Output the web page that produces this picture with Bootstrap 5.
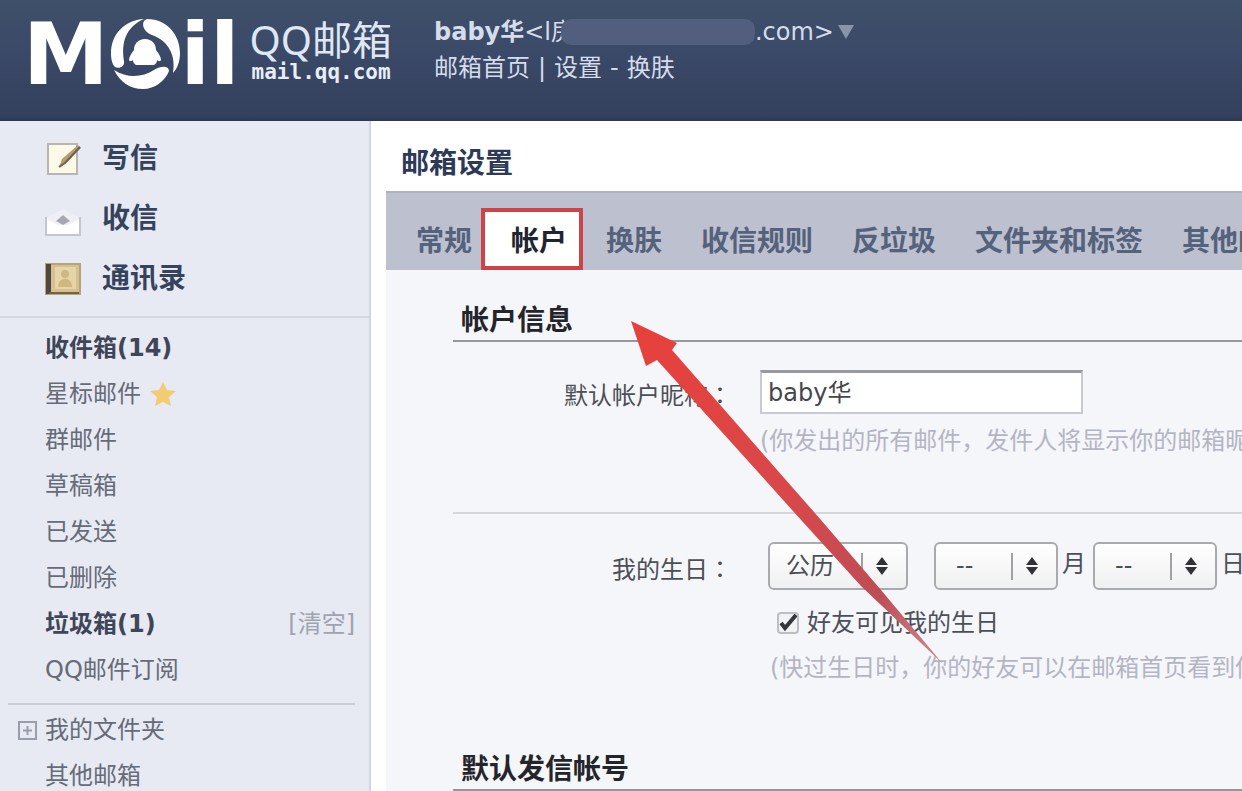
<!DOCTYPE html>
<html lang="zh-CN">
<head>
<meta charset="utf-8">
<meta name="viewport" content="width=device-width, initial-scale=1">
<title>QQ邮箱 - 邮箱设置</title>
<link href="https://cdn.jsdelivr.net/npm/bootstrap@5.3.0/dist/css/bootstrap.min.css" rel="stylesheet">
<style>
  body { font-family: "DejaVu Sans", "Noto Sans CJK SC", sans-serif; font-size: 24px; line-height: 36px; color: #4c4f5a; background: #fff; }
  a { color: inherit; text-decoration: none; }
  .topbar { height: 121px; background: linear-gradient(#3f506a, #3a4967 45%, #33405e 96%, #2b3752); color: #d5dcea; white-space: nowrap; }
  .brand { width: 404px; padding-left: 23px; color: #fff; }
  .brand-word { font-size: 86px; font-weight: 700; line-height: 108px; }
  .brand-ring { width: 72px; height: 72px; margin-top: 18px; }
  .brand-text { padding: 18px 0 0 10px; }
  .brand-name { font-family: "Noto Sans", "Noto Sans CJK SC", sans-serif; font-size: 40px; font-weight: 400; line-height: 44px; color: #dfe7f4; }
  .brand-host { font-family: "DejaVu Sans Mono", monospace; font-size: 21px; font-weight: 700; line-height: 20px; padding-left: 2px; color: #e8eef8; }
  .account { padding: 14px 0 0 30px; }
  .masked { width: 194px; height: 26px; margin-left: -14px; border-radius: 10px; background: #515e7d; }
  .caret { width: 16px; height: 14px; }
  .side { flex: 0 0 371px; background: #e7eaf3; border-right: 2px solid #d3d6e2; }
  .side-main { padding: 8px 0 7px 44px; border-bottom: 2px solid #d5d8e2; font-size: 28px; font-weight: 700; color: #36435c; }
  .side-main a { height: 60px; gap: 20px; }
  .side-main svg { width: 38px; height: 36px; }
  .folder-row { display: flex; align-items: center; height: 46px; padding: 0 14px 0 45px; color: #666b78; }
  .folder-row.unread { color: #3f4657; }
  .folders { padding: 7px 0 10px; }
  .clear-link { color: #9fa3af; }
  .more { margin: 0 14px 0 8px; border-top: 2px solid #c9ccd7; padding-top: 2px; }
  .more .folder-row { padding-left: 10px; gap: 8px; }
  .expander { width: 19px; height: 19px; flex: none; }
  .work { min-width: 0; }
  .page-title { font-size: 28px; font-weight: 700; line-height: 40px; color: #2c3a57; padding: 23px 0 7px 30px; margin: 0; }
  .panel { margin-left: 15px; background: #f5f6f9; }
  .tabs { height: 79px; padding: 16px 0 0 30px; gap: 39px; background: #bcc0cf; border-top: 2px solid #b0b3bf; font-size: 28px; font-weight: 700; white-space: nowrap; }
  .tabs .nav-link { padding: 0; line-height: 66px; color: #55627c; }
  .tabs .nav-link.active { height: 62px; line-height: 60px; margin: -1px -16px 0 -30px; padding: 0 12px 0 26px; border: 4px solid #cf4247; background: #fff; color: #1f2530; }
  .settings { padding: 31px 0 0 67px; }
  .section-title { font-size: 28px; font-weight: 700; line-height: 40px; height: 41px; color: #23252b; padding-left: 8px; margin: 0; border-bottom: 2px solid #95979d; white-space: nowrap; }
  .field-row { display: flex; white-space: nowrap; }
  .field-label { flex: 0 0 279px; padding-top: 6px; text-align: right; color: #4c4f56; }
  .colon { font-family: "Noto Sans CJK TC", sans-serif; }
  .hint { color: #b3b5c4; padding-top: 9px; }
  .nick { width: 323px; height: 44px; padding: 0 6px 4px; font-size: 24px; color: #44464c; background: #fff; border: 2px solid #c9cad1; border-top: 3px solid #999a9f; }
  .nick-row { padding: 28px 0 53px; border-bottom: 2px solid #d5d6db; }
  .picker { appearance: none; width: 124px; height: 48px; padding: 0 20px; font-size: 24px; color: #4c4f56; border: 2px solid #a9aaae; border-radius: 6px;
    background: url("data:image/svg+xml,%3Csvg xmlns='http://www.w3.org/2000/svg' width='46' height='44'%3E%3Cpath d='M2 9v27' stroke='%23a0a1a5' stroke-width='2'/%3E%3Cpath d='M22 13l6 8H16zM22 31l6-8H16z' fill='%23303238'/%3E%3C/svg%3E") right center no-repeat, linear-gradient(#fff, #f0f0f2); }
  .picker.wide { width: 140px; padding-left: 16px; }
  .picker.spaced { margin-left: 26px; }
  .unit { margin: 0 7px 4px 4px; }
  .pickers { margin-left: 12px; }
  .birth-note { margin-left: 14px; }
  .tick-line { margin-left: 21px; padding-top: 15px; }
  .tick { appearance: none; width: 22px; height: 22px; margin: 0; border: 2px solid #bdbec3; border-radius: 4px; flex: none;
    background: #f2f2f4 url("data:image/svg+xml,%3Csvg xmlns='http://www.w3.org/2000/svg' viewBox='0 0 20 20'%3E%3Cpath d='M3 10l4 5L18 2' fill='none' stroke='%2333363d' stroke-width='4'/%3E%3C/svg%3E") center / 20px no-repeat; }
  .birth-row { padding: 28px 0 64px; }
  .birth-row .field-label { padding-top: 8px; }
  .pointer { left: 259px; top: 198px; width: 314px; height: 346px; pointer-events: none; }
</style>
</head>
<body>
<div class="d-flex flex-column vh-100 overflow-hidden">
  <header class="topbar d-flex flex-shrink-0 overflow-hidden">
    <a href="#" class="brand d-flex flex-shrink-0">
      <span class="brand-word">M</span>
      <svg class="brand-ring flex-shrink-0" viewBox="0 0 72 72" fill="#fff" aria-hidden="true">
        <path d="M35 1C15 2 2 17 2 35c0 6 1 11 4 14 4 2 10 0 9-6C12 24 17 9 35 1z"/>
        <path d="M38 1c20 0 33 16 33 34 0 9-3 16-7 20 3-17-4-32-21-38-9-3-12-14-5-16z"/>
        <path d="M5 52c14 9 29 7 40 0 8-5 15-4 15 1-4 10-14 18-26 18C21 71 11 64 5 52z"/>
        <path d="M36 21c7 0 11 5 11 11 3 4 5 7 5 10-1 2-3 1-4 0 0 2-1 4-3 5H27c-2-1-3-3-3-5-1 1-3 2-4 0 0-3 2-6 5-10 0-6 4-11 11-11z"/>
      </svg>
      <span class="brand-word">il</span>
      <span class="brand-text d-flex flex-column">
        <span class="brand-name">QQ邮箱</span>
        <span class="brand-host">mail.qq.com</span>
      </span>
    </a>
    <div class="account">
      <div class="d-flex align-items-center">
        <strong>baby华</strong><span>&lt;l房</span><span class="masked position-relative"></span><span>.com&gt;</span>
        <svg class="caret ms-1" viewBox="0 0 16 14" fill="#8893ac" aria-hidden="true"><path d="M0 0h16L8 14z"/></svg>
      </div>
      <nav class="d-flex"><a href="#">邮箱首页</a><span class="mx-2">|</span><a href="#">设置</a><span class="mx-2">-</span><a href="#">换肤</a></nav>
    </div>
  </header>

  <div class="d-flex flex-grow-1">
    <aside class="side">
      <nav class="side-main">
        <a href="#" class="d-flex align-items-center">
          <svg viewBox="0 0 38 36" aria-hidden="true"><path d="M4 3h29v30H4z" fill="#fdf9e8" stroke="#b9b5b0" stroke-width="2"/><path d="M15 26l3-8L34 4l3 3-15 15z" fill="#b59d70"/><path d="M15 26l6-4L36 6" fill="none" stroke="#6d624f" stroke-width="2"/></svg>
          写信</a>
        <a href="#" class="d-flex align-items-center">
          <svg viewBox="0 0 38 36" aria-hidden="true"><path d="M2 17L19 8l17 9v18H2z" fill="#eef0f6"/><path d="M2 18l12 6h10l12-6v16H2z" fill="#fff"/><path d="M2 16v18h34V16" fill="none" stroke="#c3c6cf" stroke-width="2"/><path d="M12 20l7-6 7 6-7 4z" fill="#a5a8b2"/></svg>
          收信</a>
        <a href="#" class="d-flex align-items-center">
          <svg viewBox="0 0 38 36" aria-hidden="true"><path d="M2 3h34v30H2z" fill="#d6c091" stroke="#b5a37c" stroke-width="2"/><path d="M2 3h5v30H2z" fill="#4f4841"/><path d="M11 6h21v22H11z" fill="#e6d5a9"/><circle cx="21" cy="13" r="4" fill="#cfb77f"/><path d="M14 26c0-11 14-11 14 0z" fill="#cfb77f"/><path d="M5 32h30" stroke="#756341" stroke-width="2"/></svg>
          通讯录</a>
      </nav>
      <nav class="folders">
        <a href="#" class="folder-row unread"><strong>收件箱(14)</strong></a>
        <a href="#" class="folder-row">星标邮件
          <svg class="ms-2" width="28" height="26" viewBox="0 0 28 26" fill="#f1cc72" aria-hidden="true"><path d="M14 1l4 8 9 1-7 6 2 9-8-4-8 4 2-9-7-6 9-1z"/></svg></a>
        <a href="#" class="folder-row">群邮件</a>
        <a href="#" class="folder-row">草稿箱</a>
        <a href="#" class="folder-row">已发送</a>
        <a href="#" class="folder-row">已删除</a>
        <div class="folder-row unread justify-content-between"><a href="#"><strong>垃圾箱(1)</strong></a><a href="#" class="clear-link">[清空]</a></div>
        <a href="#" class="folder-row">QQ邮件订阅</a>
      </nav>
      <nav class="more">
        <a href="#" class="folder-row"><svg class="expander" viewBox="0 0 19 19" fill="none" stroke="#999eab" stroke-width="2" aria-hidden="true"><path d="M1 1h17v17H1zM5 9.500h9M9.500 5v9"/></svg>我的文件夹</a>
        <a href="#" class="folder-row"><span class="expander"></span>其他邮箱</a>
      </nav>
    </aside>

    <main class="work flex-grow-1 position-relative overflow-hidden">
      <h1 class="page-title">邮箱设置</h1>
      <div class="panel h-100">
        <nav class="tabs nav flex-nowrap overflow-hidden">
          <a class="nav-link" href="#">常规</a>
          <a class="nav-link active" href="#" aria-current="page">帐户</a>
          <a class="nav-link" href="#">换肤</a>
          <a class="nav-link" href="#">收信规则</a>
          <a class="nav-link" href="#">反垃圾</a>
          <a class="nav-link" href="#">文件夹和标签</a>
          <a class="nav-link" href="#">其他邮箱</a>
        </nav>
        <form class="settings">
          <h2 class="section-title">帐户信息</h2>
          <div class="field-row nick-row">
            <label class="field-label" for="nick">默认帐户昵称<span class="colon" lang="zh-TW">：</span></label>
            <div class="ps-4 ms-1">
              <input class="nick d-block" id="nick" type="text" value="baby华">
              <div class="hint">(你发出的所有邮件，发件人将显示你的邮箱昵称)</div>
            </div>
          </div>
          <div class="field-row birth-row">
            <label class="field-label" for="calendar">我的生日<span class="colon" lang="zh-TW">：</span></label>
            <div class="ps-4">
              <div class="pickers d-flex align-items-center">
                <select class="picker wide" id="calendar"><option>公历</option><option>农历</option></select>
                <select class="picker spaced" id="month" aria-label="月"><option>--</option></select>
                <label class="unit" for="month">月</label>
                <select class="picker" id="day" aria-label="日"><option>--</option></select>
                <label class="unit" for="day">日</label>
              </div>
              <div class="tick-line d-flex align-items-center gap-2">
                <input class="tick" type="checkbox" id="visible" checked><label for="visible">好友可见我的生日</label>
              </div>
              <div class="hint birth-note">(快过生日时，你的好友可以在邮箱首页看到你的生日)</div>
            </div>
          </div>
          <h2 class="section-title">默认发信帐号</h2>
        </form>
      </div>
      <svg class="pointer position-absolute" viewBox="0 0 314 346" aria-hidden="true">
        <defs><linearGradient id="red" x1="0" y1="0" x2="1" y2="1"><stop offset="0" stop-color="#e8403a"/><stop offset=".5" stop-color="#d8484a"/><stop offset=".8" stop-color="#bd4d55"/><stop offset="1" stop-color="#c98f92"/></linearGradient></defs>
        <path d="M1 2l46 22-5 7 149 170 60 70 62 74-82-78-59-65L27 41l-11 6z" fill="url(#red)"/>
      </svg>
    </main>
  </div>
</div>
<script src="https://cdn.jsdelivr.net/npm/bootstrap@5.3.0/dist/js/bootstrap.bundle.min.js"></script>
</body>
</html>
